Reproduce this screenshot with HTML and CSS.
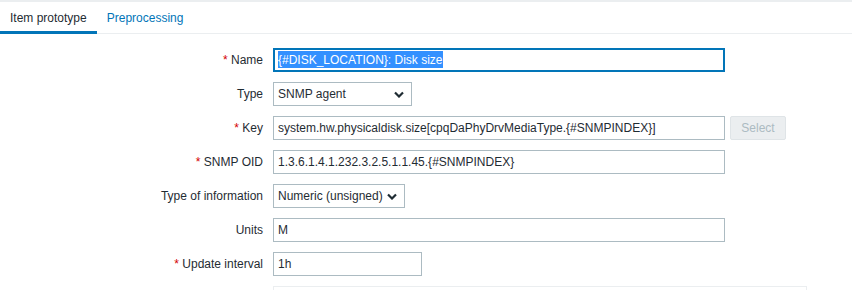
FILE: index.html
```html
<!DOCTYPE html>
<html lang="en">
<head>
    <meta charset="UTF-8">
    <title>Item prototype</title>
    <link rel="stylesheet" href="styles.css">
</head>
<body>
    <div class="tabs">
        <span class="tab active">Item prototype</span>
        <span class="tab">Preprocessing</span>
    </div>

    <div class="form">
        <label class="label"><span class="req">*</span> Name</label>
        <div class="field"><div class="input wide focused"><span class="sel">{#DISK_LOCATION}: Disk size</span></div></div>

        <label class="label">Type</label>
        <div class="field">
            <div class="input select type-select">SNMP agent
                <svg class="chevron" width="10" height="7" viewBox="0 0 10 7"><path d="M1 1.5 L5 5.5 L9 1.5" fill="none" stroke="#1f2c33" stroke-width="2.2"/></svg>
            </div>
        </div>

        <label class="label"><span class="req">*</span> Key</label>
        <div class="field">
            <div class="input wide">system.hw.physicaldisk.size[cpqDaPhyDrvMediaType.{#SNMPINDEX}]</div>
            <button class="btn" disabled>Select</button>
        </div>

        <label class="label"><span class="req">*</span> SNMP OID</label>
        <div class="field"><div class="input wide">1.3.6.1.4.1.232.3.2.5.1.1.45.{#SNMPINDEX}</div></div>

        <label class="label">Type of information</label>
        <div class="field">
            <div class="input select info-select">Numeric (unsigned)
                <svg class="chevron" width="10" height="7" viewBox="0 0 10 7"><path d="M1 1.5 L5 5.5 L9 1.5" fill="none" stroke="#1f2c33" stroke-width="2.2"/></svg>
            </div>
        </div>

        <label class="label">Units</label>
        <div class="field"><div class="input wide">M</div></div>

        <label class="label"><span class="req">*</span> Update interval</label>
        <div class="field"><div class="input short">1h</div></div>

        <label class="label"></label>
        <div class="field"><div class="table-box"></div></div>
    </div>
</body>
</html>
```

FILE: styles.css
```css
html {
    overflow: hidden;
}
body {
    margin: 0;
    font-family: "Liberation Sans", Arial, sans-serif;
    font-size: 12px;
    color: #1f2c33;
    background: #fff;
    border-top: 2px solid #ebeef0;
}
.tabs {
    display: flex;
    height: 31px;
    border-bottom: 1px solid #ebeef0;
}
.tab {
    padding: 9px 10px 0;
    color: #0275b8;
    margin-bottom: -1px;
}
.tab.active {
    color: #1f2c33;
    border-bottom: 3px solid #0275b8;
    height: 20px;
}
.form {
    display: grid;
    grid-template-columns: 263px auto;
    column-gap: 10px;
    row-gap: 10px;
    padding-top: 14px;
}
.label {
    text-align: right;
    line-height: 24px;
    white-space: nowrap;
}
.req {
    color: #d40000;
}
.field {
    display: flex;
    gap: 5px;
    align-items: flex-start;
}
.input {
    box-sizing: border-box;
    height: 24px;
    border: 1px solid #acbbc2;
    padding: 0 4px;
    line-height: 22px;
    white-space: nowrap;
    overflow: hidden;
    background: #fff;
}
.input.wide {
    width: 452px;
}
.input.short {
    width: 149px;
}
.input.focused {
    border: 2px solid #0275b8;
    line-height: 20px;
    padding: 0 3px;
}
.sel {
    background: #3390ff;
    color: #fff;
    padding: 2px 0 1px;
}
.select {
    position: relative;
    padding-right: 20px;
}
.type-select {
    width: 139px;
}
.info-select {
    width: 132px;
}
.chevron {
    position: absolute;
    right: 7px;
    top: 8px;
}
.btn {
    box-sizing: border-box;
    height: 24px;
    width: 56px;
    background: #ebeef0;
    border: 1px solid #dfe4e7;
    border-radius: 2px;
    color: #acbbc2;
    font-family: inherit;
    font-size: 12px;
    padding: 0;
}
.table-box {
    box-sizing: border-box;
    width: 534px;
    height: 4px;
    border: 1px solid #ebeef0;
    border-bottom: none;
}
```
